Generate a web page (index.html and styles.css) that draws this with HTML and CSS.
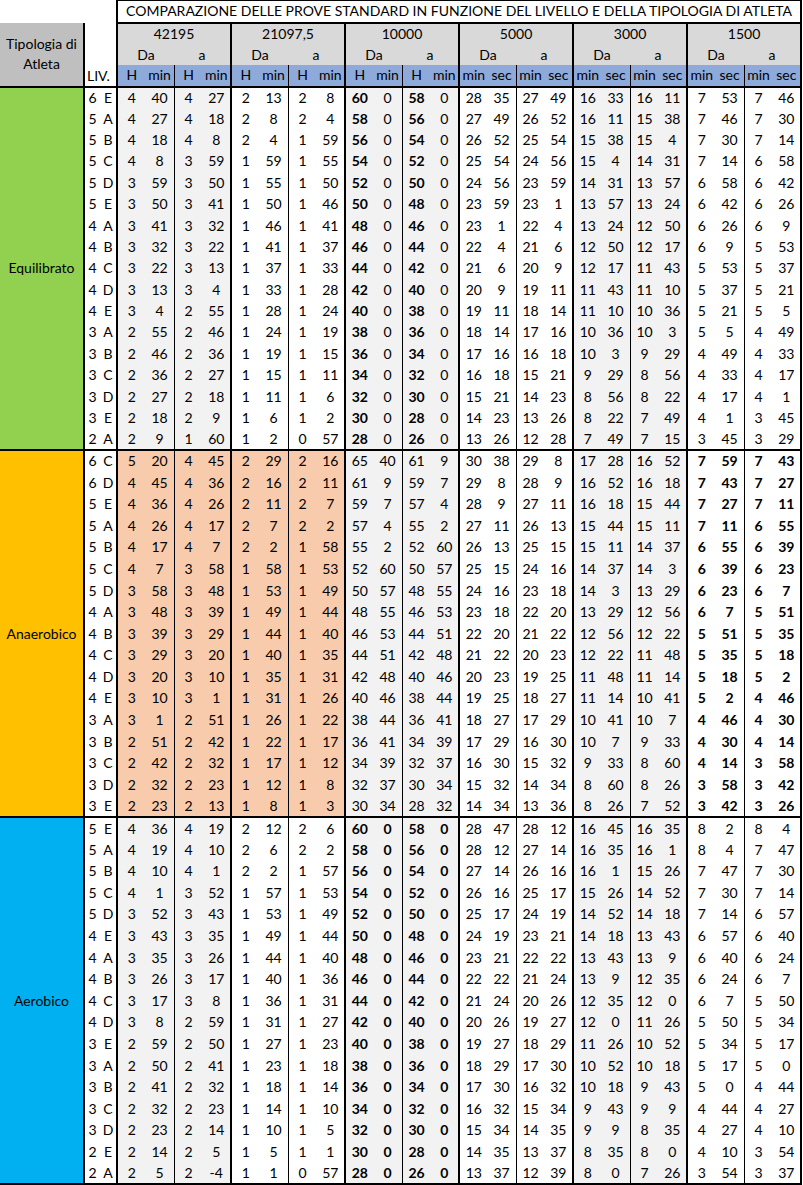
FILE: index.html
```html
<!DOCTYPE html>
<html lang="it">
<head>
<meta charset="utf-8">
<title>Comparazione prove standard</title>
<link rel="stylesheet" href="styles.css">
</head>
<body>
<table class="grid">
<colgroup>
<col class="c-lab"><col class="c-ln"><col class="c-ll">
<col span="24" class="c-v">
</colgroup>
<thead>
<tr class="t"><th colspan="3" class="blank"></th><th colspan="24" class="title">COMPARAZIONE DELLE PROVE STANDARD IN FUNZIONE DEL LIVELLO E DELLA TIPOLOGIA DI ATLETA</th></tr>
<tr class="g"><th rowspan="3" class="tip">Tipologia di<br>Atleta</th><th rowspan="3" colspan="2" class="liv">LIV.</th><th colspan="4" class="grp">42195</th><th colspan="4" class="grp">21097,5</th><th colspan="4" class="grp">10000</th><th colspan="4" class="grp">5000</th><th colspan="4" class="grp">3000</th><th colspan="4" class="grp">1500</th></tr>
<tr class="d"><th colspan="2">Da</th><th colspan="2">a</th><th colspan="2">Da</th><th colspan="2">a</th><th colspan="2">Da</th><th colspan="2">a</th><th colspan="2">Da</th><th colspan="2">a</th><th colspan="2">Da</th><th colspan="2">a</th><th colspan="2">Da</th><th colspan="2">a</th></tr>
<tr class="u"><th>H</th><th>min</th><th>H</th><th>min</th><th>H</th><th>min</th><th>H</th><th>min</th><th>H</th><th>min</th><th>H</th><th>min</th><th>min</th><th>sec</th><th>min</th><th>sec</th><th>min</th><th>sec</th><th>min</th><th>sec</th><th>min</th><th>sec</th><th>min</th><th>sec</th></tr>
</thead>
<tbody class="eq">
<tr><th rowspan="17" class="lab">Equilibrato</th><td>6<td>E<td>4<td>40<td>4<td>27<td>2<td>13<td>2<td>8<td>60<td>0<td>58<td>0<td>28<td>35<td>27<td>49<td>16<td>33<td>16<td>11<td>7<td>53<td>7<td>46</tr>
<tr><td>5<td>A<td>4<td>27<td>4<td>18<td>2<td>8<td>2<td>4<td>58<td>0<td>56<td>0<td>27<td>49<td>26<td>52<td>16<td>11<td>15<td>38<td>7<td>46<td>7<td>30</tr>
<tr><td>5<td>B<td>4<td>18<td>4<td>8<td>2<td>4<td>1<td>59<td>56<td>0<td>54<td>0<td>26<td>52<td>25<td>54<td>15<td>38<td>15<td>4<td>7<td>30<td>7<td>14</tr>
<tr><td>5<td>C<td>4<td>8<td>3<td>59<td>1<td>59<td>1<td>55<td>54<td>0<td>52<td>0<td>25<td>54<td>24<td>56<td>15<td>4<td>14<td>31<td>7<td>14<td>6<td>58</tr>
<tr><td>5<td>D<td>3<td>59<td>3<td>50<td>1<td>55<td>1<td>50<td>52<td>0<td>50<td>0<td>24<td>56<td>23<td>59<td>14<td>31<td>13<td>57<td>6<td>58<td>6<td>42</tr>
<tr><td>5<td>E<td>3<td>50<td>3<td>41<td>1<td>50<td>1<td>46<td>50<td>0<td>48<td>0<td>23<td>59<td>23<td>1<td>13<td>57<td>13<td>24<td>6<td>42<td>6<td>26</tr>
<tr><td>4<td>A<td>3<td>41<td>3<td>32<td>1<td>46<td>1<td>41<td>48<td>0<td>46<td>0<td>23<td>1<td>22<td>4<td>13<td>24<td>12<td>50<td>6<td>26<td>6<td>9</tr>
<tr><td>4<td>B<td>3<td>32<td>3<td>22<td>1<td>41<td>1<td>37<td>46<td>0<td>44<td>0<td>22<td>4<td>21<td>6<td>12<td>50<td>12<td>17<td>6<td>9<td>5<td>53</tr>
<tr><td>4<td>C<td>3<td>22<td>3<td>13<td>1<td>37<td>1<td>33<td>44<td>0<td>42<td>0<td>21<td>6<td>20<td>9<td>12<td>17<td>11<td>43<td>5<td>53<td>5<td>37</tr>
<tr><td>4<td>D<td>3<td>13<td>3<td>4<td>1<td>33<td>1<td>28<td>42<td>0<td>40<td>0<td>20<td>9<td>19<td>11<td>11<td>43<td>11<td>10<td>5<td>37<td>5<td>21</tr>
<tr><td>4<td>E<td>3<td>4<td>2<td>55<td>1<td>28<td>1<td>24<td>40<td>0<td>38<td>0<td>19<td>11<td>18<td>14<td>11<td>10<td>10<td>36<td>5<td>21<td>5<td>5</tr>
<tr><td>3<td>A<td>2<td>55<td>2<td>46<td>1<td>24<td>1<td>19<td>38<td>0<td>36<td>0<td>18<td>14<td>17<td>16<td>10<td>36<td>10<td>3<td>5<td>5<td>4<td>49</tr>
<tr><td>3<td>B<td>2<td>46<td>2<td>36<td>1<td>19<td>1<td>15<td>36<td>0<td>34<td>0<td>17<td>16<td>16<td>18<td>10<td>3<td>9<td>29<td>4<td>49<td>4<td>33</tr>
<tr><td>3<td>C<td>2<td>36<td>2<td>27<td>1<td>15<td>1<td>11<td>34<td>0<td>32<td>0<td>16<td>18<td>15<td>21<td>9<td>29<td>8<td>56<td>4<td>33<td>4<td>17</tr>
<tr><td>3<td>D<td>2<td>27<td>2<td>18<td>1<td>11<td>1<td>6<td>32<td>0<td>30<td>0<td>15<td>21<td>14<td>23<td>8<td>56<td>8<td>22<td>4<td>17<td>4<td>1</tr>
<tr><td>3<td>E<td>2<td>18<td>2<td>9<td>1<td>6<td>1<td>2<td>30<td>0<td>28<td>0<td>14<td>23<td>13<td>26<td>8<td>22<td>7<td>49<td>4<td>1<td>3<td>45</tr>
<tr><td>2<td>A<td>2<td>9<td>1<td>60<td>1<td>2<td>0<td>57<td>28<td>0<td>26<td>0<td>13<td>26<td>12<td>28<td>7<td>49<td>7<td>15<td>3<td>45<td>3<td>29</tr>
</tbody>
<tbody class="an">
<tr><th rowspan="17" class="lab">Anaerobico</th><td>6<td>C<td>5<td>20<td>4<td>45<td>2<td>29<td>2<td>16<td>65<td>40<td>61<td>9<td>30<td>38<td>29<td>8<td>17<td>28<td>16<td>52<td>7<td>59<td>7<td>43</tr>
<tr><td>6<td>D<td>4<td>45<td>4<td>36<td>2<td>16<td>2<td>11<td>61<td>9<td>59<td>7<td>29<td>8<td>28<td>9<td>16<td>52<td>16<td>18<td>7<td>43<td>7<td>27</tr>
<tr><td>5<td>E<td>4<td>36<td>4<td>26<td>2<td>11<td>2<td>7<td>59<td>7<td>57<td>4<td>28<td>9<td>27<td>11<td>16<td>18<td>15<td>44<td>7<td>27<td>7<td>11</tr>
<tr><td>5<td>A<td>4<td>26<td>4<td>17<td>2<td>7<td>2<td>2<td>57<td>4<td>55<td>2<td>27<td>11<td>26<td>13<td>15<td>44<td>15<td>11<td>7<td>11<td>6<td>55</tr>
<tr><td>5<td>B<td>4<td>17<td>4<td>7<td>2<td>2<td>1<td>58<td>55<td>2<td>52<td>60<td>26<td>13<td>25<td>15<td>15<td>11<td>14<td>37<td>6<td>55<td>6<td>39</tr>
<tr><td>5<td>C<td>4<td>7<td>3<td>58<td>1<td>58<td>1<td>53<td>52<td>60<td>50<td>57<td>25<td>15<td>24<td>16<td>14<td>37<td>14<td>3<td>6<td>39<td>6<td>23</tr>
<tr><td>5<td>D<td>3<td>58<td>3<td>48<td>1<td>53<td>1<td>49<td>50<td>57<td>48<td>55<td>24<td>16<td>23<td>18<td>14<td>3<td>13<td>29<td>6<td>23<td>6<td>7</tr>
<tr><td>4<td>A<td>3<td>48<td>3<td>39<td>1<td>49<td>1<td>44<td>48<td>55<td>46<td>53<td>23<td>18<td>22<td>20<td>13<td>29<td>12<td>56<td>6<td>7<td>5<td>51</tr>
<tr><td>4<td>B<td>3<td>39<td>3<td>29<td>1<td>44<td>1<td>40<td>46<td>53<td>44<td>51<td>22<td>20<td>21<td>22<td>12<td>56<td>12<td>22<td>5<td>51<td>5<td>35</tr>
<tr><td>4<td>C<td>3<td>29<td>3<td>20<td>1<td>40<td>1<td>35<td>44<td>51<td>42<td>48<td>21<td>22<td>20<td>23<td>12<td>22<td>11<td>48<td>5<td>35<td>5<td>18</tr>
<tr><td>4<td>D<td>3<td>20<td>3<td>10<td>1<td>35<td>1<td>31<td>42<td>48<td>40<td>46<td>20<td>23<td>19<td>25<td>11<td>48<td>11<td>14<td>5<td>18<td>5<td>2</tr>
<tr><td>4<td>E<td>3<td>10<td>3<td>1<td>1<td>31<td>1<td>26<td>40<td>46<td>38<td>44<td>19<td>25<td>18<td>27<td>11<td>14<td>10<td>41<td>5<td>2<td>4<td>46</tr>
<tr><td>3<td>A<td>3<td>1<td>2<td>51<td>1<td>26<td>1<td>22<td>38<td>44<td>36<td>41<td>18<td>27<td>17<td>29<td>10<td>41<td>10<td>7<td>4<td>46<td>4<td>30</tr>
<tr><td>3<td>B<td>2<td>51<td>2<td>42<td>1<td>22<td>1<td>17<td>36<td>41<td>34<td>39<td>17<td>29<td>16<td>30<td>10<td>7<td>9<td>33<td>4<td>30<td>4<td>14</tr>
<tr><td>3<td>C<td>2<td>42<td>2<td>32<td>1<td>17<td>1<td>12<td>34<td>39<td>32<td>37<td>16<td>30<td>15<td>32<td>9<td>33<td>8<td>60<td>4<td>14<td>3<td>58</tr>
<tr><td>3<td>D<td>2<td>32<td>2<td>23<td>1<td>12<td>1<td>8<td>32<td>37<td>30<td>34<td>15<td>32<td>14<td>34<td>8<td>60<td>8<td>26<td>3<td>58<td>3<td>42</tr>
<tr><td>3<td>E<td>2<td>23<td>2<td>13<td>1<td>8<td>1<td>3<td>30<td>34<td>28<td>32<td>14<td>34<td>13<td>36<td>8<td>26<td>7<td>52<td>3<td>42<td>3<td>26</tr>
</tbody>
<tbody class="ae">
<tr><th rowspan="17" class="lab">Aerobico</th><td>5<td>E<td>4<td>36<td>4<td>19<td>2<td>12<td>2<td>6<td>60<td>0<td>58<td>0<td>28<td>47<td>28<td>12<td>16<td>45<td>16<td>35<td>8<td>2<td>8<td>4</tr>
<tr><td>5<td>A<td>4<td>19<td>4<td>10<td>2<td>6<td>2<td>2<td>58<td>0<td>56<td>0<td>28<td>12<td>27<td>14<td>16<td>35<td>16<td>1<td>8<td>4<td>7<td>47</tr>
<tr><td>5<td>B<td>4<td>10<td>4<td>1<td>2<td>2<td>1<td>57<td>56<td>0<td>54<td>0<td>27<td>14<td>26<td>16<td>16<td>1<td>15<td>26<td>7<td>47<td>7<td>30</tr>
<tr><td>5<td>C<td>4<td>1<td>3<td>52<td>1<td>57<td>1<td>53<td>54<td>0<td>52<td>0<td>26<td>16<td>25<td>17<td>15<td>26<td>14<td>52<td>7<td>30<td>7<td>14</tr>
<tr><td>5<td>D<td>3<td>52<td>3<td>43<td>1<td>53<td>1<td>49<td>52<td>0<td>50<td>0<td>25<td>17<td>24<td>19<td>14<td>52<td>14<td>18<td>7<td>14<td>6<td>57</tr>
<tr><td>4<td>E<td>3<td>43<td>3<td>35<td>1<td>49<td>1<td>44<td>50<td>0<td>48<td>0<td>24<td>19<td>23<td>21<td>14<td>18<td>13<td>43<td>6<td>57<td>6<td>40</tr>
<tr><td>4<td>A<td>3<td>35<td>3<td>26<td>1<td>44<td>1<td>40<td>48<td>0<td>46<td>0<td>23<td>21<td>22<td>22<td>13<td>43<td>13<td>9<td>6<td>40<td>6<td>24</tr>
<tr><td>4<td>B<td>3<td>26<td>3<td>17<td>1<td>40<td>1<td>36<td>46<td>0<td>44<td>0<td>22<td>22<td>21<td>24<td>13<td>9<td>12<td>35<td>6<td>24<td>6<td>7</tr>
<tr><td>4<td>C<td>3<td>17<td>3<td>8<td>1<td>36<td>1<td>31<td>44<td>0<td>42<td>0<td>21<td>24<td>20<td>26<td>12<td>35<td>12<td>0<td>6<td>7<td>5<td>50</tr>
<tr><td>4<td>D<td>3<td>8<td>2<td>59<td>1<td>31<td>1<td>27<td>42<td>0<td>40<td>0<td>20<td>26<td>19<td>27<td>12<td>0<td>11<td>26<td>5<td>50<td>5<td>34</tr>
<tr><td>3<td>E<td>2<td>59<td>2<td>50<td>1<td>27<td>1<td>23<td>40<td>0<td>38<td>0<td>19<td>27<td>18<td>29<td>11<td>26<td>10<td>52<td>5<td>34<td>5<td>17</tr>
<tr><td>3<td>A<td>2<td>50<td>2<td>41<td>1<td>23<td>1<td>18<td>38<td>0<td>36<td>0<td>18<td>29<td>17<td>30<td>10<td>52<td>10<td>18<td>5<td>17<td>5<td>0</tr>
<tr><td>3<td>B<td>2<td>41<td>2<td>32<td>1<td>18<td>1<td>14<td>36<td>0<td>34<td>0<td>17<td>30<td>16<td>32<td>10<td>18<td>9<td>43<td>5<td>0<td>4<td>44</tr>
<tr><td>3<td>C<td>2<td>32<td>2<td>23<td>1<td>14<td>1<td>10<td>34<td>0<td>32<td>0<td>16<td>32<td>15<td>34<td>9<td>43<td>9<td>9<td>4<td>44<td>4<td>27</tr>
<tr><td>3<td>D<td>2<td>23<td>2<td>14<td>1<td>10<td>1<td>5<td>32<td>0<td>30<td>0<td>15<td>34<td>14<td>35<td>9<td>9<td>8<td>35<td>4<td>27<td>4<td>10</tr>
<tr><td>2<td>E<td>2<td>14<td>2<td>5<td>1<td>5<td>1<td>1<td>30<td>0<td>28<td>0<td>14<td>35<td>13<td>37<td>8<td>35<td>8<td>0<td>4<td>10<td>3<td>54</tr>
<tr><td>2<td>A<td>2<td>5<td>2<td>-4<td>1<td>1<td>0<td>57<td>28<td>0<td>26<td>0<td>13<td>37<td>12<td>39<td>8<td>0<td>7<td>26<td>3<td>54<td>3<td>37</tr>
</tbody>
</table>
</body>
</html>
```

FILE: styles.css
```css
html, body {
  margin: 0;
  padding: 0;
  background: #ffffff;
}

body {
  font-family: Lato, "Liberation Sans", sans-serif;
  font-size: 14px;
  color: #000;
}

.grid {
  border-collapse: collapse;
  table-layout: fixed;
  width: 802px;
  border-right: 2px solid #000;
  border-bottom: 2px solid #000;
}

.c-lab { width: 84px; }
.c-ln { width: 16px; }
.c-ll { width: 17px; }
.c-v { width: 28.5px; }

.grid th,
.grid td {
  padding: 0;
  text-align: center;
  vertical-align: middle;
  font-weight: normal;
  white-space: nowrap;
  overflow: hidden;
  line-height: 1;
}

/* header rows */
.t { height: 22px; }
.g { height: 22px; }
.d { height: 20px; }
.u { height: 22px; }

.blank { border: none; }

.title {
  border-top: 1px solid #000;
  border-left: 2px solid #000;
  border-right: 2px solid #000;
  border-bottom: 2px solid #000;
  font-size: 14px;
  letter-spacing: 0;
}

.tip {
  background: #bfbfbf;
  border-right: 2px solid #000;
  line-height: 20px !important;
}

.liv {
  background: #fff;
  border-right: 2px solid #000;
  text-align: left !important;
  vertical-align: bottom !important;
  padding: 0 0 3px 2px !important;
}

.grp {
  background: #d9d9d9;
  border-left: 2px solid #000;
  border-right: 2px solid #000;
}

.d th {
  background: #d9d9d9;
}

.d th:nth-last-child(odd) {
  border-right: 2px solid #000;
}

.u th {
  background: #8eaadb;
}

thead {
  border-bottom: 2px solid #000;
}

.u th:nth-last-child(4n+3),
tbody td:nth-last-child(4n+3) {
  border-right: 1px solid #000;
}

.u th:nth-last-child(4n+1),
tbody td:nth-last-child(4n+1) {
  border-right: 2px solid #000;
}

/* body */
tbody tr { height: 21.4px; }
tbody.an tr,
tbody.ae tr { height: 21.6px; }

tbody.an,
tbody.ae {
  border-top: 2px solid #000;
}

.lab {
  border-right: 2px solid #000;
}

.eq .lab { background: #92d050; }
.an .lab { background: #ffc000; }
.ae .lab { background: #00b0f0; }

tbody td {
  background: #fff;
}

tbody td:nth-last-child(n+21):nth-last-child(-n+24),
tbody td:nth-last-child(n+13):nth-last-child(-n+16),
tbody td:nth-last-child(n+5):nth-last-child(-n+8) {
  background: #f2f2f2;
}

tbody.an td:nth-last-child(n+17):nth-last-child(-n+24) {
  background: #f8cbad;
}

/* bold values */
.eq td:nth-last-child(16),
.eq td:nth-last-child(14),
.ae td:nth-last-child(n+13):nth-last-child(-n+16),
.an td:nth-last-child(-n+4) {
  font-weight: bold;
}
```
